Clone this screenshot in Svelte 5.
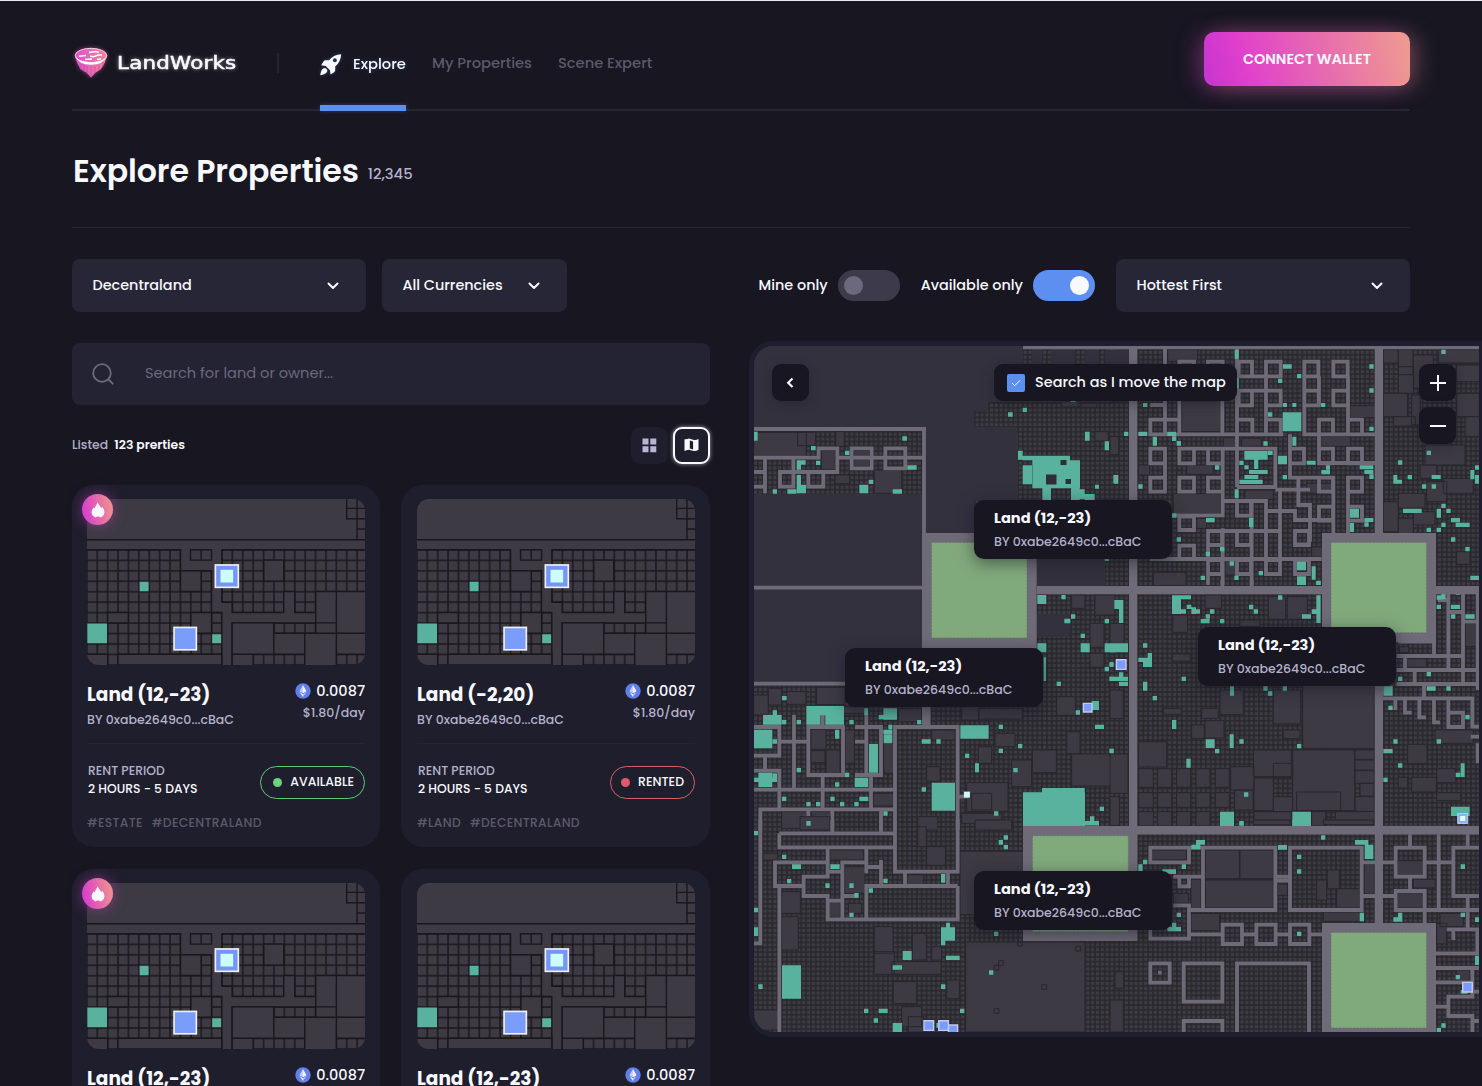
<script lang="ts">
  type Land = { title: string; hot: boolean; available: boolean; kind: string };
  type District = {
    x: number;
    y: number;
    estates: string;
    roads: string;
    leased: string;
  };

  const nav = ['My Properties', 'Scene Expert'];

  const lands: Land[] = [
    { title: 'Land (12,-23)', hot: true, available: true, kind: '#ESTATE' },
    { title: 'Land (-2,20)', hot: false, available: false, kind: '#LAND' },
    { title: 'Land (12,-23)', hot: true, available: true, kind: '#ESTATE' },
    { title: 'Land (12,-23)', hot: false, available: false, kind: '#LAND' },
  ];

  // Turns "x y w h, x y w h" into one path of rectangles
  function rects(list: string): string {
    return list
      .split(',')
      .map((r) => r.trim().split(/\s+/).map(Number))
      .map(([x, y, w, h]) => `M${x} ${y}h${w}v${h}h${-w}z`)
      .join('');
  }

  // Each district has its own origin and is drawn at a third of its unit size
  const districts: District[] = [
    {
      x: 745,
      y: 335,
      estates:
        '26 292 158 72, 158 292 54 40, 272 290 26 44, 229 345 42 60, 326 346 48 48, 388 405 82 70, 270 420 44 26, 1050 290 40 28, 950 200 58 16, 485 378 44 14, 1000 205 56 12',
      roads:
        'M26 282H543M537 277V600M834 37H1110M26 368H221V340H277V411H105V455H145V368M26 411H60M60 368V475M26 455H60M190 411V455H235V411M277 368H537M320 340h60v60h-60zM421 340h60v60h-60z',
      leased:
        '26 290 12 27, 198 333 14 13, 300 347 13 13, 472 304 14 13, 213 377 13 13, 155 376 27 13, 155 389 13 15, 155 420 13 30, 155 449 28 26, 127 463 27 13, 83 463 13 13, 343 449 27 26, 371 434 14 13, 443 463 28 13, 487 391 28 13, 789 232 14 13, 833 218 13 13, 977 192 15 8, 819 347 14 27, 833 362 142 14, 833 391 28 57, 862 374 114 86, 976 376 29 84, 892 460 26 40, 978 460 26 35, 1004 463 15 30, 1019 477 30 18, 1020 290 14 27, 1079 319 13 27, 1050 449 12 12, 1079 670 13 8, 1105 420 8 25',
    },
    {
      x: 1110,
      y: 335,
      estates:
        '215 198 118 92, 190 476 142 60, 173 44 90 35, 85 390 34 30, 230 390 80 28, 340 308 40 28, 405 465 85 28, 720 212 76 36, 632 304 90 30, 605 636 32 30, 130 712 98 40, 345 670 32 50, 820 44 45 40, 865 44 44 75, 910 60 60 100, 865 95 46 80, 820 175 72 70, 850 245 66 28, 905 180 26 90, 985 44 124 40, 1040 90 70 50, 1040 175 68 70, 1065 245 44 60, 945 330 120 60, 930 390 50 40, 1000 430 90 45, 950 440 60 60, 865 475 80 44, 820 500 45 90, 865 550 45 50, 910 530 65 40, 1040 650 40 38, 395 310 60 24, 590 445 80 30, 0 305 26 54, 0 180 50 20, 260 550 30 30',
      roads:
        'M0 37H1110M165 40V300M208 180V298M337 198V300M381 40V456M121 298H520M208 341H496V456H381M468 80V298M381 124H514M430 167H514M540 298V428H670V600M510 465V590M496 464H600M565 428V510H600V620M627 384H800M714 124V298M583 80V298H800M627 124V210M627 254V384M338 341V541H190M337 498H468V675M425 498V750M468 528H555V555H670M294 588V750M338 580V750M120 672H635M294 588H510M510 545V675M560 628H600M714 470V600M208 80h44v44h-44zM294 80h44v44h-44zM386 80h40v44h-40zM468 80h44v44h-44zM583 80h42v44h-42zM670 80h43v44h-43zM386 167h40v44h-40zM468 167h44v44h-44zM583 167h43v44h-43zM670 167h44v44h-44zM121 210h44M121 254h44v44h-44zM165 254h43v44h-43zM381 254h46v44h-46zM468 254h44v44h-44zM627 254h42v44h-42zM714 254h42v44h-42zM121 341h44v44h-44zM208 341h44v44h-44zM294 341h44v44h-44zM540 341h42v44h-42zM627 341h42v44h-42zM714 341h42v44h-42zM121 428h44v42h-44zM165 384V428M208 428h44v42h-44zM294 428h44v42h-44zM627 428h42v42h-42zM714 428h42v42h-42zM381 498h42v44h-42zM627 515h42v42h-42zM714 515h42v42h-42zM208 545h44v40h-44zM294 588h42v42h-42zM381 588h42v42h-42zM555 588h42v42h-42zM208 632h44v40h-44zM294 675h42v42h-42zM381 675h42v42h-42zM468 675h42v42h-42zM555 675h42v42h-42z',
      leased:
        '374 44 12 27, 378 130 8 30, 519 88 26 13, 504 131 13 13, 561 117 13 13, 778 88 13 13, 778 160 13 13, 778 275 13 13, 994 44 13 13, 519 204 12 12, 547 204 12 12, 633 204 13 12, 99 204 13 12, 474 232 13 13, 518 232 56 57, 547 305 12 27, 460 319 13 13, 42 290 13 13, 85 290 27 13, 172 290 26 13, 186 304 13 14, 200 318 13 14, 128 305 13 27, 315 391 13 13, 85 448 13 13, 403 348 70 26, 474 347 14 13, 432 374 13 28, 388 377 13 13, 403 391 13 12, 417 405 56 12, 403 420 42 12, 388 434 70 13, 504 362 27 26, 590 377 27 12, 648 391 12 13, 634 405 26 13, 518 420 13 13, 749 391 41 12, 763 405 27 12, 778 418 13 14, 374 463 12 27, 417 549 13 27, 186 535 13 13, 288 549 26 13, 200 607 13 13, 330 636 13 13, 287 650 13 13, 359 679 13 13, 272 722 13 13, 373 722 13 13, 446 708 13 13, 720 521 27 27, 720 564 12 27, 763 549 27 12, 763 562 13 13, 561 680 27 26, 561 724 27 26, 605 694 12 40, 619 737 13 13, 950 347 13 13, 864 376 13 13, 850 420 12 26, 862 434 14 12, 893 420 13 13, 936 448 13 13, 965 448 13 13, 965 420 27 12, 1081 405 12 28, 1095 391 13 13, 1095 420 13 26, 12 420 13 26, 879 521 56 13, 994 506 13 13, 980 521 13 27, 1009 521 13 13, 1023 549 27 13, 1037 563 42 13, 994 563 13 13, 980 578 13 13, 950 578 13 13, 1023 607 13 13, 1066 636 13 13, 1081 722 27 13',
    },
    {
      x: 745,
      y: 580,
      estates:
        '26 345 44 60, 70 325 40 50, 125 335 58 38, 215 322 85 52, 980 45 40 40, 1050 45 60 60, 1035 130 42 72, 1035 220 42 42, 935 350 56 56, 965 455 40 66, 862 510 72 68, 980 522 130 96, 665 608 124 86, 650 380 50 40, 702 385 130 32, 750 460 60 40, 700 500 40 50, 198 448 45 60, 243 510 42 70, 198 512 42 36, 300 450 28 100, 385 640 60 38, 416 490 30 90, 800 540 60 80, 560 450 70 30, 518 710 60 40, 545 560 40 44, 680 640 60 50, 110 695 76 50, 200 695 58 50, 650 700 120 30, 250 380 110 20, 460 385 70 40',
      roads:
        'M26 23H537M26 311H300M26 441H103V527H26M147 405V625M103 485H190M60 527V572M26 572H103V685M190 441H294V585H190ZM233 405V441M233 585V685M330 441H408V585H330M364 385V585M330 485H364M378 585V685M26 629H450M46 750V688H450M190 688V750M262 688V750M408 688V750M450 750V441H638V750M640 650H670',
      leased:
        '877 45 27 27, 949 45 13 13, 978 103 13 13, 958 116 18 14, 1079 117 13 13, 1007 161 13 13, 877 190 27 27, 1007 190 27 27, 1079 190 31 27, 896 232 7 71, 1093 247 13 13, 1079 261 13 13, 1093 290 17 13, 935 305 13 13, 1040 363 22 27, 992 391 13 13, 1050 434 27 13, 1093 506 13 13, 761 434 13 13, 646 436 85 40, 819 492 13 13, 761 506 13 13, 660 521 13 13, 690 550 12 27, 805 564 13 13, 530 478 27 13, 574 478 13 13, 516 420 13 13, 415 385 41 34, 401 405 20 13, 358 385 11 20, 313 420 13 13, 184 378 113 28, 184 406 42 28, 241 406 56 28, 111 348 14 13, 83 391 13 14, 54 405 56 29, 111 420 13 13, 155 420 13 13, 26 449 56 56, 83 478 13 13, 270 449 13 27, 372 492 27 86, 430 434 12 14, 415 449 27 13, 416 463 26 27, 155 564 13 13, 40 578 42 43, 26 593 70 13, 83 580 13 13, 300 578 13 13, 270 607 13 13, 329 593 41 28, 560 608 70 84, 530 622 13 13, 111 650 13 13, 256 650 13 13, 343 650 27 13, 184 666 13 13, 213 666 13 13, 285 666 13 13, 328 666 13 13, 415 694 13 13, 184 723 13 13, 747 694 13 13, 834 637 186 100, 891 624 128 26, 1064 680 13 13, 1035 709 13 14, 1020 723 42 13',
    },
    {
      x: 1110,
      y: 580,
      estates:
        '188 105 45 52, 285 45 50 40, 475 50 52 68, 532 50 60 68, 390 120 60 20, 188 222 54 22, 330 330 70 74, 275 385 50 30, 490 330 82 102, 285 422 57 52, 245 435 38 40, 85 485 85 76, 578 310 215 195, 430 510 114 80, 548 510 186 182, 490 550 58 42, 432 594 58 98, 490 650 58 45, 560 636 132 56, 735 510 58 28, 735 540 58 30, 735 572 58 38, 750 610 42 38, 735 650 58 44, 676 695 118 43, 432 695 112 43, 605 695 42 43, 362 560 70 70, 374 630 56 60, 86 566 44 56, 143 566 42 56, 200 566 42 56, 258 566 42 56, 316 566 42 56, 86 638 44 44, 143 638 42 44, 200 638 42 44, 258 638 42 44, 316 638 42 44, 86 695 44 43, 143 695 42 43, 200 695 42 43, 258 695 42 43, 893 493 58 58, 865 592 28 32, 980 566 56 42, 980 638 72 24, 905 592 74 44, 975 450 115 40, 0 130 42 60, 0 522 54 118, 0 330 40 86, 0 650 28 86, 160 385 54 18, 520 450 50 26, 890 236 60 26, 868 200 28 18, 1066 130 32 70',
      roads:
        'M337 0V25M425 0V25M1015 42V270M1059 42V310M983 60H1010M865 185H978M972 185V228M860 228H1059M885 228V270M860 270H1100M914 270V312M860 312H1100M1103 25V330M942 312V355M819 355H1087V440H1110M856 355V390M885 355V398H905M928 355V412H948M972 355V427H990M1015 355V441H1059V398H1015M1020 96H1059M1059 125H1100M1082 470H1110M1103 490V550',
      leased:
        '13 60 27 27, 27 85 13 44, 0 190 54 27, 0 247 10 14, 0 290 54 13, 27 277 13 26, 27 305 27 13, 186 46 27 56, 213 46 30 12, 186 88 42 13, 230 74 14 13, 244 82 14 20, 258 88 12 13, 300 88 13 13, 287 103 13 13, 272 117 27 13, 330 117 13 13, 504 46 13 13, 417 74 13 14, 431 88 13 13, 576 103 27 13, 605 88 14 14, 619 46 13 83, 561 0 27 14, 619 3 13 12, 99 190 13 13, 113 219 13 14, 85 233 14 13, 99 233 27 28, 99 305 13 27, 128 348 13 13, 215 290 13 13, 186 420 13 27, 360 319 12 28, 460 319 13 13, 474 334 13 13, 518 319 13 13, 287 478 27 26, 315 507 13 13, 359 463 12 41, 388 478 13 13, 561 492 13 13, 229 536 13 27, 0 507 11 13, 402 637 13 13, 330 695 42 43, 388 724 13 13, 547 695 56 43, 994 31 13 27, 980 46 14 13, 1037 31 13 13, 980 74 13 13, 1023 74 27 13, 1023 103 13 13, 1066 103 28 13, 864 290 13 13, 950 276 13 13, 820 319 28 28, 950 319 27 13, 1009 319 13 13, 835 377 13 13, 1066 405 13 13, 980 478 13 13, 850 478 13 13, 820 507 28 13, 864 550 13 13, 1052 550 12 41, 1037 578 14 13, 820 593 13 13, 1023 680 56 28',
    },
    {
      x: 745,
      y: 820,
      estates:
        '662 366 358 270, 645 94 190 190, 388 320 56 80, 388 395 60 68, 440 425 148 38, 502 340 42 80, 445 485 70 66, 470 560 60 60, 545 80 56 56, 518 20 26 60, 26 570 74 60, 110 215 56 65, 298 140 62 80, 110 290 50 100, 486 164 50 30, 605 480 38 56, 490 590 46 46, 310 250 40 30, 255 90 100 30, 54 100 44 20, 690 0 110 30, 250 246 36 46, 560 380 30 40, 165 -10 90 40, 992 379 15 14, 890 494 15 14, 747 566 15 14, 761 422 14 14, 747 436 14 14, 818 366 14 12',
      roads:
        'M46 0V370H26M103 40V82H450V0M103 40H450M262 0V40M408 0V40M450 80V155H638V0M480 155V198M609 155V198M638 198V298H248V228H176V170H248V82M638 198H364V298M248 127H90V198H176M103 198V636M248 155H292M292 298V127H364V82M364 127V160M364 141H408M408 120V198M248 242H292M292 228H335',
      leased:
        '834 0 186 17, 1020 3 42 13, 776 46 13 13, 761 60 13 14, 776 75 13 13, 184 3 13 14, 26 33 13 13, 111 104 13 13, 141 133 27 14, 256 133 28 14, 126 177 13 13, 241 190 13 14, 313 190 13 14, 328 219 13 14, 371 205 13 13, 415 176 13 13, 313 278 13 13, 26 263 13 14, 26 322 13 26, 40 493 13 14, 111 436 57 100, 588 162 13 26, 588 322 42 40, 603 308 12 14, 588 362 13 14, 603 407 41 13, 473 393 27 27, 443 436 28 13, 588 493 13 14, 732 451 13 13, 747 335 13 13, 357 566 13 13, 401 566 27 13, 386 595 13 13, 443 609 28 27, 574 609 6 14, 645 566 13 13',
    },
    {
      x: 1110,
      y: 820,
      estates:
        '286 90 102 86, 390 90 100 86, 286 180 204 84, 126 90 104 30, 243 280 86 52, 243 178 30 88, 640 0 150 14, 430 0 110 14, 763 132 30 90, 862 122 78 44, 862 218 78 46, 502 192 30 34, 680 206 70 58, 652 150 36 56, 910 178 66 26, 980 310 30 62, 990 280 70 40, 0 540 40 96, 15 455 26 50, 640 276 110 28, 1040 450 40 32, 190 220 45 30, 620 180 30 60',
      roads:
        'M121 83H237V127H121ZM237 83H496V270H237M279 83V270M540 83H755V270H540ZM190 170H279M208 170h29v29h-29zM190 256H237V356H121V330M237 343H335M338 314h58v58h-58zM439 314h58v58h-58zM540 314h58v58h-58zM396 343H439M497 343H540M598 343H640M121 430h58v58h-58zM221 430h116v115h-116zM381 636V430H597V636M221 636V603H337V636M755 127H857M755 228H857M857 83h87v87h-87zM900 43V83M944 127H1030M986 43V270M1073 43V83M1110 83H1030V228H1110M900 170V213M857 213h87v57h-87zM944 270H1110M944 270V310M1073 228V328M1010 328H1102V400H978M1030 328V360M978 444H1110M1087 444V530H1015V588H1087V636M978 487H1087M978 560H1015M1087 515H1110M1087 603H1110M144 458h11M496 170H540M496 182H540',
      leased:
        '330 0 42 17, 388 3 13 13, 547 0 56 17, 633 46 13 13, 504 75 27 14, 258 60 27 14, 244 74 27 14, 99 119 13 14, 85 133 13 20, 215 133 13 14, 157 148 41 14, 561 104 13 13, 561 148 13 13, 735 60 40 14, 764 74 26 43, 749 278 13 26, 864 278 13 27, 850 292 14 13, 1052 133 13 14, 1052 278 13 13, 1095 292 13 14, 1095 407 13 28, 1037 465 13 13, 1052 510 20 11, 200 278 13 13, 186 308 13 14, 172 321 41 13, 561 335 13 13, 994 610 13 13, 980 624 13 13',
    },
  ];

  const vacant =
    'M754 346H1023V402H988V411H974V427H922V683H754ZM926 427H1015L1018 433V500H974V534H926ZM1037 559H1105V586H1037ZM1037 614H1070V637H1037ZM1032 349H1042V402H1032ZM1051 349H1075V402H1051ZM1085 349H1099V402H1085ZM1105 349H1129V402H1105Z';

  // The strip of parcels under the north-west avenue
  const parcelStrip = 'M754 431H922V494H754Z';

  const avenues =
    'M1037 586H1479V594.3H1037ZM1129 346H1137.3V940H1129ZM1374.7 346H1383V923H1374.7ZM1023 826H1479V834.5H1023ZM922 648H930.6V726H922Z';
  const plazas = rects('922 533 114.7 115.5, 1322 533 114 109, 1023 826 114.3 115, 1322 923 114 109');
  const parks = rects('931.5 542.4 95.5 95.6, 1331 542.4 95.5 90.3, 1032.5 835.7 95.8 96, 1331 932.4 95.5 95.5');
  const owned = rects('1083.4 703.4 8.6 8.6, 1116.4 659.8 9.6 9.6, 924 1020.8 9.6 9.6, 938.8 1020.8 9.6 9.6, 948.6 1025 9 9, 1462.7 982.4 9.6 9.6');

  const popups = [
    { left: 220, top: 154 },
    { left: 91, top: 302 },
    { left: 444, top: 281 },
    { left: 220, top: 525 },
  ];
</script>

{#snippet chevron()}
  <svg class="chevron" width="12" height="8" viewBox="0 0 12 8"><path d="M1.5 1.5 6 6l4.5-4.5" /></svg>
{/snippet}

{#snippet thumb(id: number)}
  <svg class="thumb" viewBox="46 58 835 497" preserveAspectRatio="none">
    <defs>
      <pattern id="lot{id}" x="45.6" y="210.5" width="31.22" height="31.28" patternUnits="userSpaceOnUse">
        <rect width="31.3" height="31.3" fill="#18171b" />
        <rect x="2.2" y="2.2" width="26.9" height="26.9" fill="#3d3a43" />
      </pattern>
    </defs>
    <rect x="46" y="58" width="835" height="497" fill="url(#lot{id})" />
    <g fill="#3d3a43" stroke="#18171b" stroke-width="4.2">
      <path d="M40 50H857V180H40ZM826 50h31v36h-31zM826 86h31v31h-31zM857 50h30v36h-30zM857 86h30v31h-30zM857 117h30v31h-30zM857 148h30v32h-30z" />
      <path d="M40 180H890V210H451V367H482V398H637V335H670V398H733V429H482V560H451V398H420V273H327V210H40Z" />
      <path d="M357 210h32v31h-32zM389 210h31v31h-31z" />
      <path d="M327 273h62v62h-62zM577 241h60v63h-60zM358 398h62v62h-62zM108 398h62v31h-62zM733 335h62v94h-62zM795 335h95v125h-95zM482 429h125v94h-125zM607 460h93v63h-93zM700 460h95v100h-95zM795 460h95v63h-95zM139 523h312v32h-312zM40 523h68v40h-68zM482 523h63v40h-63zM733 429h62v31h-62z" />
    </g>
    <path fill="#58b29d" d="M204 306h27v28h-27zM47 431h59v59h-59zM422 463h27v27h-27z" />
    <g stroke="#eef0f7" stroke-width="5">
      <rect x="431.500" y="255.500" width="69" height="67" fill="#7596f6" />
      <rect x="307.500" y="442.500" width="67" height="67" fill="#7a9dfb" />
    </g>
    <rect x="447" y="270" width="38" height="38" fill="#ccfdf7" />
  </svg>
{/snippet}

<div class="page">
  <header>
    <a class="logo" href="#home">
      <svg width="36" height="36" viewBox="0 0 36 36">
        <defs>
          <linearGradient id="gem" x1="0" y1="0" x2="1" y2="0">
            <stop offset="0" stop-color="#e04fcf" /><stop offset="1" stop-color="#ee8796" />
          </linearGradient>
        </defs>
        <path d="M2 11Q3.500 18 7.500 24L14 28 18 32.500 22 28 28 24Q32.500 18 34 11Z" fill="url(#gem)" />
        <path d="M8 19v6M11 20v7M14 21v8M18 22v9M22 21v7M26 20v6M30 17v4" stroke="#c93d9f" stroke-width=".8" opacity=".7" />
        <ellipse cx="18" cy="10.500" rx="15.800" ry="7.200" fill="url(#gem)" stroke="#ffd9f2" stroke-width=".9" />
        <path d="M2.400 11.500Q6 19.800 18 19.800T33.600 11.500Q30 17.200 18 17.200T2.400 11.500Z" fill="#fff" />
        <path d="m6 11.200 7-.6M16 7.600l7-1 3 .8M12 14.600l7-.6M21 11.600l4-1.600h4M17 11.200l4 .6M24 14.600l4-.8" stroke="#fff" stroke-width="1.500" fill="none" />
      </svg>
      <span>LandWorks</span>
    </a>
    <i class="divider"></i>
    <nav>
      <a class="active" href="#explore">
        <svg width="22" height="22" viewBox="0 0 22 22">
          <path fill="#f8f8ff" fill-rule="evenodd" d="M21.200.2C16.500.4 12.300 2.200 9 6.300L5.600 6.200C4.700 6.200 4 6.600 3.500 7.400L1.200 11.300l4.600.6L10 16.200l.5 4.400 3.600-2.400c.7-.5 1.100-1.200 1.100-2.100V12.500C19 9.300 21 5 21.200.2ZM14.900 4.300a2 2 0 1 1 0 4 2 2 0 0 1 0-4Z" />
          <path fill="#f8f8ff" d="M3.600 14.200C1.700 15 .6 17.600.3 21.200 3.500 20.600 6.200 19.900 7 17.800L7.400 16.200 5.800 14.200Z" />
        </svg>
        Explore
      </a>
      {#each nav as item}
        <a href="#nav">{item}</a>
      {/each}
    </nav>
    <button class="connect">CONNECT WALLET</button>
  </header>

  <section class="heading">
    <h1>Explore Properties</h1>
    <span>12,345</span>
  </section>

  <section class="filters">
    <button class="select wide"><span>Decentraland</span>{@render chevron()}</button>
    <button class="select"><span>All Currencies</span>{@render chevron()}</button>
    <div class="switches">
      <span class="mine">Mine only</span><i class="toggle"></i>
      <span class="avail">Available only</span><i class="toggle on"></i>
    </div>
    <button class="select wide hottest"><span>Hottest First</span>{@render chevron()}</button>
  </section>

  <main>
    <div class="listing">
      <div class="search">
        <svg width="24" height="24" viewBox="0 0 24 24"><circle cx="11" cy="11" r="8.800" /><path d="m17.500 17.500 4.200 4.200" /></svg>
        <span>Search for land or owner...</span>
      </div>

      <div class="toolbar">
        <p>Listed <b>123 prerties</b></p>
        <button class="view" aria-label="Grid">
          <svg width="15" height="15" viewBox="0 0 15 15"><path fill="#b9b5d6" d="M.5.5h6v6h-6zM8.300.5h6v6h-6zM.5 8.300h6v6h-6zM8.300 8.300h6v6h-6z" /></svg>
        </button>
        <button class="view selected" aria-label="Map">
          <svg width="15" height="14" viewBox="0 0 15 14">
            <path fill="#f8f8ff" fill-rule="evenodd" d="M.5 1.200Q3 1.600 5 .6l5 1.300q2.300.3 4.500-.8v10.600Q12 13.300 10 13l-5-1.300q-2.500.3-4.500 1.300ZM5.800 2.600v8l3.300.9V3.400Z" />
          </svg>
        </button>
      </div>

      <div class="cards">
        {#each lands as land, i}
          <article>
            {#if land.hot}
              <div class="hot">
                <svg width="14" height="16" viewBox="0 0 14 16"><path fill="#fbf7ff" d="M6.600.3c.5 2.200 3 3.600 3.600 6 .5-.3.8-.9.9-1.500C12.400 6.200 13.500 8.300 13.400 10.500 13.200 13.600 11 15 9 15.500 9 14.900 8.200 14.600 7 14.600 5.800 14.600 5 14.900 5 15.500 2.500 15 .6 13 .6 10.300.6 7.900 2 6.500 2.800 5.200c.2.700.5 1.100 1 1.400C3.800 4 6.400 2.600 6.600.3Z" /></svg>
              </div>
            {/if}
            {@render thumb(i)}
            <div class="summary">
              <div>
                <h2>{land.title}</h2>
                <p class="owner">BY 0xabe2649c0...cBaC</p>
              </div>
              <div class="price">
                <p class="eth">
                  <svg width="16" height="16" viewBox="0 0 16 16"><circle cx="8" cy="8" r="7.700" fill="#627eea" /><path fill="#fff" d="M8 2 4.400 8.200 8 10.300Z" opacity=".65" /><path fill="#fff" d="m8 2 3.600 6.200L8 10.300ZM8 11.200v2.900L4.400 9.100Z" opacity=".9" /><path fill="#fff" d="M8 11.200v2.900l3.600-5Z" opacity=".55" /></svg>
                  0.0087
                </p>
                <p class="rate">$1.80/day</p>
              </div>
            </div>
            <div class="terms">
              <div>
                <p class="label">RENT PERIOD</p>
                <p class="period">2 HOURS - 5 DAYS</p>
              </div>
              <span class="status" class:rented={!land.available}><i></i>{land.available ? 'AVAILABLE' : 'RENTED'}</span>
            </div>
            <p class="tags"><span>{land.kind}</span><span>#DECENTRALAND</span></p>
          </article>
        {/each}
      </div>
    </div>

    <div class="map">
      <svg class="atlas" viewBox="754 346 725 686">
        <defs>
          <pattern id="parcel" x="921.700" y="586" width="4.817" height="4.817" patternUnits="userSpaceOnUse">
            <rect width="4.900" height="4.900" fill="#28272c" />
            <rect x=".75" y=".75" width="3.300" height="3.300" fill="#3d3b43" />
          </pattern>
        </defs>
        <rect x="754" y="346" width="725" height="686" fill="url(#parcel)" />
        <path d={vacant} fill="#34313f" />
        <path d={parcelStrip} fill="url(#parcel)" />
        {#each districts as d}
          <g transform="translate({d.x} {d.y}) scale(.33333)">
            <path d={rects(d.estates)} fill="#3d3a43" stroke="#28272c" stroke-width="3" />
            <path d={d.roads} fill="none" stroke="#6e6a77" stroke-width="11.500" />
            <path d={rects(d.leased)} fill="#58b29d" />
          </g>
        {/each}
        <path d="M1060.500 460h6v5h-6zM1046 474.500h10.500v10h-10.500zM1065.500 479h5.500v5h-5.500z" fill="#302e35" />
        <path d={avenues} fill="#6e6a77" />
        <path d={plazas} fill="#6e6a77" />
        <path d={parks} fill="#80a97c" stroke="#5f7563" stroke-width=".7" stroke-dasharray="2 1.500" />
        <path d={owned} fill="#7a9dfb" stroke="#c5c9ee" stroke-width="1.400" />
        <path d="M963.900 791.600h6v6h-6z" fill="#ccfdf7" />
        <path d="M1457.700 813.500h10v10h-10z" fill="#8fb0fa" stroke="#b5c8f5" stroke-width="1" />
        <path d="M1460.200 816h5v5h-5z" fill="#e8fdff" />
      </svg>

      <button class="control back" aria-label="Back">
        <svg width="10" height="12" viewBox="0 0 10 12"><path d="M6.500 1.500 2.200 5.700 6.500 10" stroke-width="2.200" /></svg>
      </button>
      <div class="follow">
        <i><svg width="10" height="8" viewBox="0 0 10 8"><path d="m1 4 2.700 2.700L9 1.300" /></svg></i>
        <span>Search as I move the map</span>
      </div>
      <div class="zoom">
        <button class="control" aria-label="Zoom in"><svg width="18" height="18" viewBox="0 0 18 18"><path d="M1 9h16M9 1v16" stroke-width="2" /></svg></button>
        <button class="control" aria-label="Zoom out"><svg width="18" height="18" viewBox="0 0 18 18"><path d="M1 9h16" stroke-width="2" /></svg></button>
      </div>
      {#each popups as p}
        <div class="popup" style="left: {p.left}px; top: {p.top}px">
          <h3>Land (12,-23)</h3>
          <p>BY 0xabe2649c0...cBaC</p>
        </div>
      {/each}
    </div>
  </main>
</div>

<style>
  :global(body) {
    background: #171621;
    overflow: hidden;
  }
  .page {
    box-sizing: border-box;
    width: 1482px;
    height: 1086px;
    overflow: hidden;
    border-top: 1px solid #e9ebef;
    background: #171621;
    color: #f8f8ff;
    font-family: Poppins, Inter, sans-serif;
    font-size: 14.400px;
    font-weight: 500;
  }
  h1, h2, h3, p { margin: 0; }
  a { color: inherit; text-decoration: none; }
  i { font-style: normal; }
  svg { display: block; flex: none; }
  button {
    box-sizing: border-box;
    border: 0;
    padding: 0;
    color: inherit;
    font: inherit;
    display: flex;
    align-items: center;
  }

  header {
    display: flex;
    align-items: center;
    height: 108px;
    margin: 0 72px;
    border-bottom: 2px solid #262533;
  }
  .logo {
    display: flex;
    align-items: center;
    gap: 8px;
    width: 205px;
    margin-top: 16px;
  }
  .logo svg {
    margin-left: 1px;
    filter: drop-shadow(0 0 2px #e66bc588);
  }
  .logo span {
    font-family: 'DejaVu Sans', sans-serif;
    font-size: 17.500px;
    letter-spacing: .2px;
    line-height: 24px;
    transform: scaleX(1.22);
    transform-origin: left;
    -webkit-text-stroke: .5px #fff;
    text-shadow: 0 0 4px #ffffffaa;
  }
  .divider {
    width: 2px;
    height: 20px;
    margin: 16px 41px 0 0;
    background: #262533;
  }
  nav {
    display: flex;
    align-self: stretch;
    gap: 26px;
    margin-bottom: -2px;
    font-size: 14.700px;
    color: #5c5a6a;
  }
  nav a {
    box-sizing: border-box;
    display: flex;
    align-items: center;
    padding-top: 15px;
  }
  nav a.active {
    gap: 11px;
    padding-top: 23px;
    border-bottom: 6px solid #5d8ff0;
    border-radius: 2px 2px 0 0;
    color: #f8f8ff;
    filter: drop-shadow(0 0 2px #5d8ff055);
  }
  .connect {
    width: 206px;
    height: 54px;
    margin: 8px 0 0 auto;
    justify-content: center;
    border-radius: 10px;
    background: linear-gradient(75deg, #c535cf, #e03fcc 20%, #ee9892 96%);
    box-shadow: -8px 2px 22px #d03bd050, 8px 2px 22px #ee989250;
    font-weight: 600;
  }

  .heading {
    box-sizing: border-box;
    display: flex;
    align-items: center;
    height: 117px;
    margin: 0 72px;
    border-bottom: 1px solid #262533;
  }
  h1 {
    padding: 4px 9px 0 1px;
    font-size: 31.600px;
    line-height: 48px;
    font-weight: 600;
    letter-spacing: -.1px;
  }
  .heading span {
    padding-top: 10px;
    color: #b4b1cb;
    font-size: 14.800px;
  }

  .filters {
    display: flex;
    align-items: center;
    gap: 16px;
    height: 53px;
    margin: 31px 72px 0;
  }
  .select {
    width: 185px;
    height: 53px;
    padding: 0 27.500px 0 20.500px;
    justify-content: space-between;
    border-radius: 8px;
    background: #272636;
  }
  .wide { width: 294px; }
  .chevron path {
    fill: none;
    stroke: #f8f8ff;
    stroke-width: 2;
    stroke-linecap: round;
    stroke-linejoin: round;
  }
  .switches {
    display: flex;
    align-items: center;
    margin-left: auto;
  }
  .switches .avail { margin-left: 21px; }
  .toggle {
    box-sizing: border-box;
    width: 62px;
    height: 31px;
    margin-left: 10px;
    padding: 6px;
    border-radius: 16px;
    background: #3d3b4b;
  }
  .toggle::before {
    content: '';
    display: block;
    width: 19px;
    height: 19px;
    border-radius: 50%;
    background: #6b697b;
  }
  .toggle.on { background: #5d8ff0; }
  .toggle.on::before {
    margin-left: auto;
    background: #f8f8ff;
  }
  .hottest { margin-left: 5px; }

  main {
    display: flex;
    margin: 29px 0 0 72px;
    align-items: flex-start;
  }
  .listing {
    width: 638px;
    padding-top: 2px;
  }
  .search {
    box-sizing: border-box;
    display: flex;
    align-items: center;
    gap: 30px;
    height: 62px;
    padding: 0 0 1px 19px;
    border-radius: 8px;
    background: #242333;
    color: #6b697e;
    font-weight: 400;
    font-size: 14.600px;
  }
  .search svg {
    fill: none;
    stroke: #6b697e;
    stroke-width: 1.800;
    stroke-linecap: round;
  }
  .toolbar {
    display: flex;
    align-items: center;
    gap: 5px;
    height: 38px;
    margin: 21px 0;
  }
  .toolbar p {
    margin-right: auto;
    font-size: 12.400px;
    color: #b4b1cb;
  }
  .toolbar b {
    margin-left: 3px;
    font-weight: 600;
    color: #f8f8ff;
  }
  .view {
    width: 37px;
    height: 37px;
    justify-content: center;
    border-radius: 9px;
    background: #1f1e2c;
  }
  .selected {
    border: 2px solid #f8f8ff;
    box-shadow: 0 0 4px #f8f8ff99;
  }

  .cards {
    display: grid;
    grid-template-columns: 308px 309px;
    column-gap: 21px;
    row-gap: 22px;
  }
  article {
    position: relative;
    box-sizing: border-box;
    height: 362px;
    padding: 14px 15px 0;
    border-radius: 22px;
    background: #1f1e2d;
  }
  article:nth-child(even) { padding-left: 16px; }
  .hot {
    position: absolute;
    left: 10px;
    top: 9px;
    display: grid;
    place-items: center;
    width: 31px;
    height: 31px;
    border-radius: 50%;
    background: linear-gradient(80deg, #d535d2, #ee8f92 90%);
    box-shadow: 0 0 14px #d03bd080;
  }
  .thumb {
    width: 278px;
    height: 166px;
    border-radius: 12px;
  }
  .summary {
    display: flex;
    justify-content: space-between;
    height: 78px;
    border-bottom: 1px solid #262533;
  }
  h2 {
    padding-top: 16px;
    font-size: 18.500px;
    line-height: 28px;
    font-weight: 700;
  }
  .owner {
    color: #b4b1cb;
    font-size: 12.500px;
    line-height: 22px;
  }
  .price { text-align: right; }
  .eth {
    display: flex;
    align-items: center;
    gap: 5px;
    padding-top: 15px;
    font-size: 14.500px;
    line-height: 22px;
  }
  .rate {
    color: #b4b1cb;
    font-size: 12.500px;
    line-height: 21px;
  }
  .terms {
    display: flex;
    align-items: center;
    justify-content: space-between;
    height: 38px;
    padding: 17px 0 0 1px;
    font-size: 12.350px;
    line-height: 18px;
  }
  .label { color: #b4b1cb; }
  .status {
    box-sizing: border-box;
    display: flex;
    align-items: center;
    gap: 8px;
    height: 33px;
    margin-top: 4px;
    padding: 0 10px 0 12px;
    border: 1px solid #5fc878;
    border-radius: 17px;
    font-size: 12.500px;
  }
  .status i {
    width: 9px;
    height: 9px;
    border-radius: 50%;
    background: #6bd37c;
  }
  .rented { border-color: #df5b6c; padding: 0 10px; }
  .rented i { background: #df5b6c; }
  .tags {
    display: flex;
    gap: 9px;
    padding-top: 15px;
    color: #5c5a6a;
    font-size: 12.350px;
    letter-spacing: .3px;
    line-height: 18px;
  }

  .map {
    position: relative;
    width: 725px;
    height: 686px;
    margin-left: 39px;
    flex: none;
    border: 5px solid #1f1e2e;
    border-right-width: 3px;
    border-radius: 24px 0 0 24px;
  }
  .atlas {
    width: 725px;
    height: 686px;
    border-radius: 19px 0 0 19px;
  }
  .control {
    width: 37px;
    height: 37px;
    justify-content: center;
    border-radius: 9px;
    background: #171621;
    box-shadow: 0 3px 12px #17162155;
  }
  .control path, .follow path {
    fill: none;
    stroke: #f8f8ff;
  }
  .back {
    position: absolute;
    left: 18px;
    top: 18px;
  }
  .zoom {
    position: absolute;
    left: 665px;
    top: 18px;
    display: grid;
    gap: 6px;
  }
  .follow {
    position: absolute;
    left: 240px;
    top: 18px;
    display: flex;
    align-items: center;
    gap: 10px;
    box-sizing: border-box;
    width: 243px;
    height: 37px;
    padding-left: 13px;
    border-radius: 9px;
    background: #171621;
    box-shadow: 0 3px 12px #17162166;
    font-size: 14.450px;
    white-space: nowrap;
  }
  .follow i {
    display: grid;
    place-items: center;
    width: 18px;
    height: 18px;
    border-radius: 2px;
    background: #5d8ff0;
  }
  .popup {
    position: absolute;
    box-sizing: border-box;
    width: 198px;
    height: 59px;
    padding: 7px 0 0 20px;
    border-radius: 10px;
    background: #171621;
    box-shadow: 0 4px 16px #17162188;
    white-space: nowrap;
  }
  .popup h3 {
    font-size: 14.600px;
    line-height: 23px;
    font-weight: 700;
  }
  .popup p {
    color: #b4b1cb;
    font-size: 12.550px;
    line-height: 23px;
  }
</style>
